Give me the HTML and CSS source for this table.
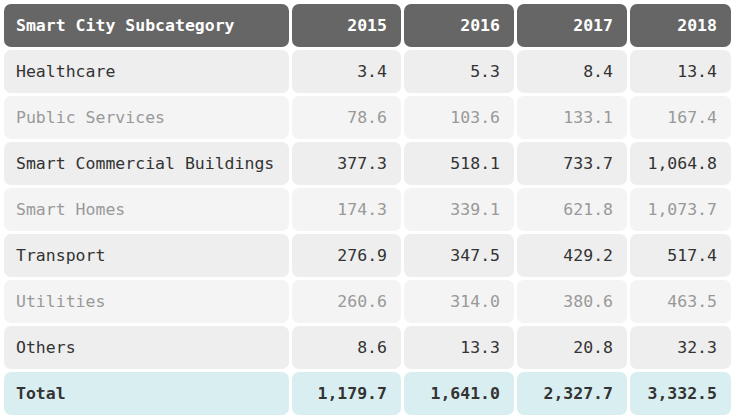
FILE: index.html
```html
<!DOCTYPE html>
<html lang="en">
<head>
<meta charset="utf-8">
<title>Smart City Subcategory</title>
<link rel="stylesheet" href="styles.css">
</head>
<body>
<table class="data">
  <colgroup>
    <col class="c-name"><col class="c-year"><col class="c-year2"><col class="c-year2"><col class="c-last">
  </colgroup>
  <thead>
    <tr class="head">
      <th class="name">Smart City Subcategory</th>
      <th>2015</th><th>2016</th><th>2017</th><th>2018</th>
    </tr>
  </thead>
  <tbody>
    <tr class="odd"><td class="name">Healthcare</td><td>3.4</td><td>5.3</td><td>8.4</td><td>13.4</td></tr>
    <tr class="even"><td class="name">Public Services</td><td>78.6</td><td>103.6</td><td>133.1</td><td>167.4</td></tr>
    <tr class="odd"><td class="name">Smart Commercial Buildings</td><td>377.3</td><td>518.1</td><td>733.7</td><td>1,064.8</td></tr>
    <tr class="even"><td class="name">Smart Homes</td><td>174.3</td><td>339.1</td><td>621.8</td><td>1,073.7</td></tr>
    <tr class="odd"><td class="name">Transport</td><td>276.9</td><td>347.5</td><td>429.2</td><td>517.4</td></tr>
    <tr class="even"><td class="name">Utilities</td><td>260.6</td><td>314.0</td><td>380.6</td><td>463.5</td></tr>
    <tr class="odd"><td class="name">Others</td><td>8.6</td><td>13.3</td><td>20.8</td><td>32.3</td></tr>
    <tr class="total"><td class="name">Total</td><td>1,179.7</td><td>1,641.0</td><td>2,327.7</td><td>3,332.5</td></tr>
  </tbody>
</table>
</body>
</html>
```
FILE: styles.css
```css
html, body {
  margin: 0;
  padding: 0;
  background: #ffffff;
}
body {
  padding: 1px;
}
.data {
  border-collapse: separate;
  border-spacing: 3px;
  table-layout: fixed;
  width: 733px;
  font-family: "DejaVu Sans Mono", "Liberation Mono", monospace;
  font-size: 16.5px;
}
.c-name { width: 285px; }
.c-year { width: 109px; }
.c-year2 { width: 110px; }
.c-last { width: 101px; }
.data th, .data td {
  height: 43px;
  padding: 0 14px 0 12px;
  box-sizing: border-box;
  text-align: right;
  border-radius: 7px;
  white-space: nowrap;
  vertical-align: middle;
}
.data .name {
  text-align: left;
}
.head th {
  background: #666666;
  color: #ffffff;
  font-weight: bold;
}
.odd td {
  background: #eeeeee;
  color: #333333;
}
.even td {
  background: #f4f4f4;
  color: #999999;
}
.total td {
  background: #d9eef0;
  color: #333333;
  font-weight: bold;
}
```
